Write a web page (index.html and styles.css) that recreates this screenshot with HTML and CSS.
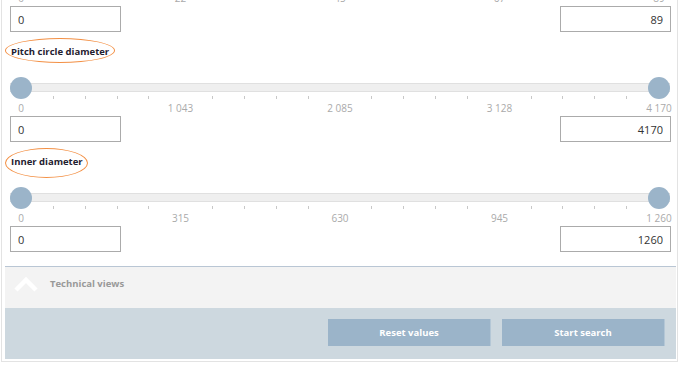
FILE: index.html
```html
<!DOCTYPE html>
<html lang="en">
<head>
    <meta charset="UTF-8">
    <title>Bearing search</title>
    <link rel="stylesheet" href="styles.css">
</head>
<body>

    <div class="page">
        <div class="filters">

            <div class="group">
                <div class="label-row"><span class="label">Width</span></div>
                <div class="slider">
                    <div class="track"></div>
                    <span class="handle" style="left: 0%"></span>
                    <span class="handle" style="left: 100%"></span>
                </div>
                <div class="ticks"></div>
                <div class="scale">
                    <span>0</span><span>22</span><span>45</span><span>67</span><span>89</span>
                </div>
                <div class="inputs">
                    <input class="field" type="text" value="0">
                    <input class="field right" type="text" value="89">
                </div>
            </div>

            <div class="group">
                <div class="label-row">
                    <span class="label">Pitch circle diameter</span>
                    <span class="mark mark-pitch"></span>
                </div>
                <div class="slider">
                    <div class="track"></div>
                    <span class="handle" style="left: 0%"></span>
                    <span class="handle" style="left: 100%"></span>
                </div>
                <div class="ticks"></div>
                <div class="scale">
                    <span>0</span><span>1 043</span><span>2 085</span><span>3 128</span><span>4 170</span>
                </div>
                <div class="inputs">
                    <input class="field" type="text" value="0">
                    <input class="field right" type="text" value="4170">
                </div>
            </div>

            <div class="group">
                <div class="label-row">
                    <span class="label">Inner diameter</span>
                    <span class="mark mark-inner"></span>
                </div>
                <div class="slider">
                    <div class="track"></div>
                    <span class="handle" style="left: 0%"></span>
                    <span class="handle" style="left: 100%"></span>
                </div>
                <div class="ticks"></div>
                <div class="scale">
                    <span>0</span><span>315</span><span>630</span><span>945</span><span>1 260</span>
                </div>
                <div class="inputs">
                    <input class="field" type="text" value="0">
                    <input class="field right" type="text" value="1260">
                </div>
            </div>

        </div>

        <div class="bottom">
            <div class="tech">
                <svg class="chevron" width="24" height="16" viewBox="0 0 24 16">
                    <polyline points="2,14 12,4 22,14" fill="none" stroke="#fff" stroke-width="4.5"/>
                </svg>
                <span class="tech-title">Technical views</span>
            </div>
            <div class="actions">
                <button class="btn">Reset values</button>
                <button class="btn">Start search</button>
            </div>
        </div>
    </div>

    <script>
        // tick marks between the scale labels (the ones at label positions stay hidden)
        document.querySelectorAll('.ticks').forEach(function (row) {
            for (let i = 0; i <= 20; i++) {
                const t = document.createElement('i');
                if (i % 5 === 0) t.className = 'major';
                row.appendChild(t);
            }
        });
    </script>
</body>
</html>
```

FILE: styles.css
```css
/* search filter panel */
body {
    margin: 0;
    background-color: #fff;
    font-family: "Open Sans", "DejaVu Sans", sans-serif;
    color: #333;
}
.page {
    margin: -72px 2px 0 1px;
    border: 1px solid #e3e3e3;
    border-top: none;
    padding-bottom: 2px;
}
.filters {
    padding: 0 6px 0 8px;
}
.group {
    margin-bottom: 6px;
}
.label-row {
    position: relative;
    height: 26px;
    display: flex;
    align-items: center;
    padding-left: 1px;
}
.label {
    font-size: 9.5px;
    font-weight: bold;
    color: #1f2130;
}
/* hand drawn orange rings around the labels */
.mark {
    position: absolute;
    border: 1.6px solid #f39045;
    border-radius: 50%;
}
.mark-pitch {
    left: -5px;
    top: 0;
    width: 108px;
    height: 23px;
}
.mark-inner {
    left: -5px;
    top: 0;
    width: 81px;
    height: 28px;
}

.slider {
    position: relative;
    height: 22px;
    margin: 13px 1px 0 0;
}
.track {
    position: absolute;
    left: 0;
    right: 0;
    top: 6px;
    height: 7px;
    background-color: #efefef;
    border-top: 1px solid #e0e0e0;
    border-bottom: 1px solid #e0e0e0;
}
.handle {
    position: absolute;
    top: 0;
    width: 22px;
    height: 22px;
    border-radius: 50%;
    background-color: #9bb4c9;
}
.handle:last-of-type {
    margin-left: -22px;
}

.ticks {
    display: flex;
    justify-content: space-between;
    height: 3px;
    margin: -3px 12px 0 11px;
}
.ticks i {
    width: 1px;
    height: 3px;
    background-color: #c8c8c8;
}
.ticks i.major {
    background-color: transparent;
}
.scale {
    display: flex;
    justify-content: space-between;
    margin: 2px 12px 0 11px;
    height: 14px;
    font-size: 10px;
    line-height: 14px;
    color: #aaa;
}
.scale span {
    width: 0;
    display: flex;
    justify-content: center;
    white-space: nowrap;
}

.inputs {
    display: flex;
    justify-content: space-between;
    margin-top: 1px;
}
.field {
    box-sizing: border-box;
    width: 111px;
    height: 26px;
    border: 1px solid #ababab;
    padding: 0 7px 0 7px;
    font-family: inherit;
    font-size: 11px;
    color: #333;
    background-color: #fff;
}
.field.right {
    text-align: right;
}

.bottom {
    margin: 14px 1px 0 3px;
}
.tech {
    display: flex;
    align-items: center;
    height: 42px;
    border-top: 1px solid #b9c6d4;
    background-color: #f3f3f3;
    padding-left: 9px;
    padding-bottom: 8px;
    box-sizing: border-box;
}
.chevron {
    display: block;
}
.tech-title {
    margin-left: 12px;
    font-size: 9.5px;
    font-weight: bold;
    color: #999;
}
.actions {
    display: flex;
    justify-content: flex-end;
    gap: 11px;
    height: 51px;
    box-sizing: border-box;
    padding: 11px 11px 0 0;
    background-color: #cdd8df;
}
.btn {
    width: 163px;
    height: 27px;
    border: none;
    border-right: 1px solid #b4c7d6;
    background-color: #9bb4c9;
    color: #fff;
    font-family: inherit;
    font-size: 9.5px;
    font-weight: bold;
    cursor: pointer;
}
```
